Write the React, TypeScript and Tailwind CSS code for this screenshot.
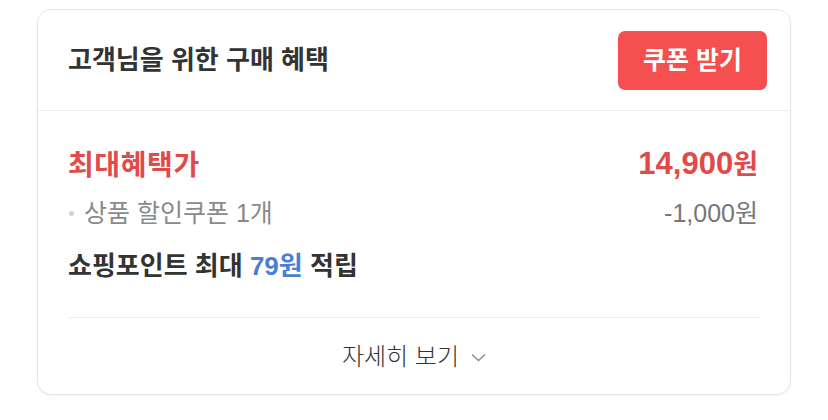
import React from 'react'

// latin digits from Liberation Sans, hangul falls through to Noto CJK KR
const font = { fontFamily: '"Liberation Sans", "Noto Sans CJK KR", "Noto Sans", sans-serif' }

const App = () => {
  return (
    <div className='w-[828px] h-[420px] bg-white pt-[9px] pl-[37px]' style={font}>
      <div className='w-[754px] h-[386px] border border-[#e6e6e6] rounded-[14px] bg-white flex flex-col shadow-[0_1px_2px_rgba(0,0,0,0.04)]'>
        <div className='h-[101px] border-b border-[#eeeeee] flex items-center justify-between pl-[30px] pr-[23px] shrink-0'>
          <h2 className='text-[26px] font-semibold text-[#333333] leading-[34px]'>고객님을 위한 구매 혜택</h2>
          <button className='w-[149px] h-[59px] rounded-[7px] bg-[#f64f4f] text-white text-[25px] font-semibold leading-none'>
            쿠폰 받기
          </button>
        </div>

        <div className='px-[30px] pt-[37px] flex-1 flex flex-col'>
          <div className='flex items-center justify-between h-[36px]'>
            <span className='text-[28px] font-bold text-[#e24a4a] leading-[36px] tracking-[0.6px]'>최대혜택가</span>
            <span className='font-bold text-[#e24a4a] leading-[36px] mr-[2px]'>
              <span className='text-[31px]'>14,900</span>
              <span className='text-[27px]'>원</span>
            </span>
          </div>
          <div className='flex items-center justify-between h-[30px] mt-[14px]'>
            <div className='flex items-center'>
              <span className='w-[5px] h-[5px] rounded-full bg-[#d0d0d0] ml-[1px] mr-[10px]'></span>
              <span className='text-[25px] text-[#8a8a8a] leading-[30px]'>상품 할인쿠폰 1개</span>
            </div>
            <span className='text-[25px] text-[#777777] leading-[30px] mr-[2px]'>-1,000원</span>
          </div>
          <div className='flex items-center h-[32px] mt-[22px]'>
            <span className='text-[26px] font-bold text-[#333333] leading-[32px]'>
              쇼핑포인트 최대 <span className='text-[#4a7fd4]'>79원</span> 적립
            </span>
          </div>
          <div className='mt-[35px] border-t border-[#eeeeee]'></div>
          <div className='flex-1 flex items-center justify-center gap-[12px] pt-[2px]'>
            <span className='text-[24px] font-light text-[#333333] leading-[30px]'>자세히 보기</span>
            <svg width='15' height='9' viewBox='0 0 15 9' fill='none'>
              <path d='M1 1.5L7.5 7.5L14 1.5' stroke='#888888' strokeWidth='1.3' />
            </svg>
          </div>
        </div>
      </div>
    </div>
  )
}

export default App
